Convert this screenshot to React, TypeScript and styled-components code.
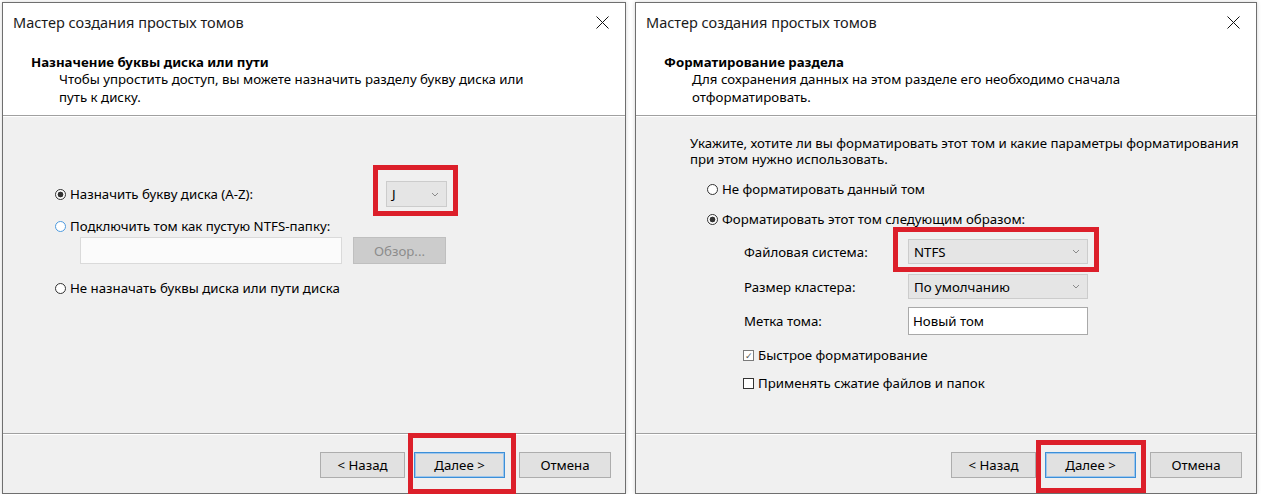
import styled, { createGlobalStyle } from "styled-components";

const GlobalStyle = createGlobalStyle`
  html, body {
    margin: 0;
    background: #ffffff;
  }
  body {
    font-family: "Noto Sans", "Liberation Sans", sans-serif;
    font-size: 13.25px;
    color: #000;
  }
`;

const Chevron = () => (
  <svg width="8" height="5" viewBox="0 0 8 5">
    <polyline points="1,1 4,4 7,1" fill="none" stroke="#8a8a8a" strokeWidth="1" />
  </svg>
);

const CloseIcon = () => (
  <svg width="13" height="13" viewBox="0 0 13 13">
    <line x1="0.5" y1="0.5" x2="12.5" y2="12.5" stroke="#111" strokeWidth="1" />
    <line x1="12.5" y1="0.5" x2="0.5" y2="12.5" stroke="#111" strokeWidth="1" />
  </svg>
);

const Wizard = ({
  header,
  subtitle,
  width,
  nextMark,
  children,
}: {
  header: string;
  subtitle: React.ReactNode;
  width: number;
  nextMark: [number, number, number, number];
  children: React.ReactNode;
}) => (
  <Dialog $width={width}>
    <TitleBar>
      <span>Мастер создания простых томов</span>
      <CloseIcon />
    </TitleBar>
    <Header>
      <h3>{header}</h3>
      <p>{subtitle}</p>
    </Header>
    <Separator />
    <Body>{children}</Body>
    <Separator />
    <Footer>
      <Button $width={85}>&lt; Назад</Button>
      <Marked $t={nextMark[0]} $r={nextMark[1]} $b={nextMark[2]} $l={nextMark[3]}>
        <Button $width={91} $primary>
          Далее &gt;
        </Button>
      </Marked>
      <Button $width={92} $gap={14}>
        Отмена
      </Button>
    </Footer>
  </Dialog>
);

const App = () => {
  return (
    <>
      <GlobalStyle />
      <Page>
        <Wizard
          width={624}
          header="Назначение буквы диска или пути"
          subtitle={
            <>
              Чтобы упростить доступ, вы можете назначить разделу букву диска или
              <br />
              путь к диску.
            </>
          }
          nextMark={[19, 11, 16, 6]}
        >
          <LetterBody>
            <LetterRow>
              <Radio $checked>Назначить букву диска (A-Z):</Radio>
              <Marked $t={16} $r={11} $b={9} $l={13}>
                <Select $width={61} $height={26}>
                  <span>J</span>
                  <Chevron />
                </Select>
              </Marked>
            </LetterRow>
            <Radio $hover $mt={10}>
              Подключить том как пустую NTFS-папку:
            </Radio>
            <PathRow>
              <PathField />
              <BrowseButton disabled>Обзор...</BrowseButton>
            </PathRow>
            <Radio $mt={15}>Не назначать буквы диска или пути диска</Radio>
          </LetterBody>
        </Wizard>

        <Wizard
          width={622}
          header="Форматирование раздела"
          subtitle={
            <>
              Для сохранения данных на этом разделе его необходимо сначала
              <br />
              отформатировать.
            </>
          }
          nextMark={[12, 10, 15, 9]}
        >
          <FormatBody>
            <Intro>
              Укажите, хотите ли вы форматировать этот том и какие параметры форматирования
              <br />
              при этом нужно использовать.
            </Intro>
            <Indent>
              <Radio $mt={13}>Не форматировать данный том</Radio>
              <Radio $checked $mt={12}>
                Форматировать этот том следующим образом:
              </Radio>
            </Indent>
            <Options>
              <OptionLabel>Файловая система:</OptionLabel>
              <Marked $t={12} $r={11} $b={8} $l={15}>
                <Select $width={180} $height={25}>
                  <span>NTFS</span>
                  <Chevron />
                </Select>
              </Marked>
              <OptionLabel>Размер кластера:</OptionLabel>
              <Select $width={180} $height={25}>
                <span>По умолчанию</span>
                <Chevron />
              </Select>
              <OptionLabel>Метка тома:</OptionLabel>
              <TextField>Новый том</TextField>
            </Options>
            <Checks>
              <Check $checked $mt={9}>
                Быстрое форматирование
              </Check>
              <Check $mt={10}>Применять сжатие файлов и папок</Check>
            </Checks>
          </FormatBody>
        </Wizard>
      </Page>
    </>
  );
};

const Page = styled.div`
  display: flex;
  gap: 9px;
  height: 494px;
  padding: 2px 0 0 2px;
  box-sizing: border-box;
  overflow: hidden;
`;

const Dialog = styled.div<{ $width: number }>`
  width: ${({ $width }) => $width}px;
  height: 492px;
  box-sizing: border-box;
  border: 1px solid #6f6f6f;
  box-shadow: 0 0 4px rgba(0, 0, 0, 0.18);
  background: #f0f0f0;
  display: flex;
  flex-direction: column;
  flex-shrink: 0;
`;

const TitleBar = styled.div`
  height: 38px;
  background: #fff;
  display: flex;
  align-items: center;
  justify-content: space-between;
  padding: 0 16px 0 10px;
  font-size: 14.5px;
  color: #1a1a1a;
  svg {
    margin-top: 1px;
  }
`;

const Header = styled.div`
  background: #fff;
  padding: 12px 0 9px 28px;
  h3 {
    margin: 0;
    font-size: 13.25px;
    font-weight: 700;
    line-height: 18px;
  }
  p {
    margin: 0;
    padding-left: 28px;
    line-height: 17.5px;
  }
`;

const Separator = styled.div`
  height: 1px;
  background: #a0a0a0;
  border-bottom: 1px solid #fff;
  flex-shrink: 0;
`;

const Body = styled.div`
  flex: 1;
  min-height: 0;
`;

const Footer = styled.div`
  height: 58px;
  display: flex;
  justify-content: flex-end;
  align-items: flex-start;
  gap: 9px;
  padding: 17px 14px 0 0;
  box-sizing: border-box;
`;

const Button = styled.button<{ $width: number; $primary?: boolean; $gap?: number }>`
  width: ${({ $width }) => $width}px;
  height: 26px;
  margin-left: ${({ $gap }) => ($gap ? $gap - 9 : 0)}px;
  background: #e1e1e1;
  border: 1px solid ${({ $primary }) => ($primary ? "#3c8fd8" : "#adadad")};
  box-shadow: ${({ $primary }) => ($primary ? "inset 0 0 0 1px #9dc6ec" : "none")};
  font-family: inherit;
  font-size: 13.25px;
  color: #000;
  padding: 0;
`;

const Marked = styled.span<{ $t: number; $r: number; $b: number; $l: number }>`
  position: relative;
  display: inline-flex;
  &::after {
    content: "";
    position: absolute;
    top: -${({ $t }) => $t}px;
    right: -${({ $r }) => $r}px;
    bottom: -${({ $b }) => $b}px;
    left: -${({ $l }) => $l}px;
    border: 5px solid #dc1f2a;
    pointer-events: none;
  }
`;

const Radio = styled.div<{ $checked?: boolean; $hover?: boolean; $mt?: number }>`
  display: flex;
  align-items: center;
  gap: 4px;
  height: 18px;
  margin-top: ${({ $mt }) => $mt ?? 0}px;
  white-space: nowrap;
  &::before {
    content: "";
    width: 11px;
    height: 11px;
    box-sizing: border-box;
    border-radius: 50%;
    border: 1px solid ${({ $hover }) => ($hover ? "#4d9be0" : "#333")};
    background: ${({ $checked }) =>
      $checked ? "radial-gradient(circle, #333 0 2.6px, #fff 3.2px)" : "#fff"};
    flex-shrink: 0;
  }
`;

const Check = styled.div<{ $checked?: boolean; $mt?: number }>`
  display: flex;
  align-items: center;
  gap: 4px;
  height: 18px;
  margin-top: ${({ $mt }) => $mt ?? 0}px;
  &::before {
    content: ${({ $checked }) => ($checked ? '"✓"' : '""')};
    width: 11px;
    height: 11px;
    box-sizing: border-box;
    border: 1px solid ${({ $checked }) => ($checked ? "#7a7a7a" : "#333")};
    background: #fff;
    font-size: 9px;
    line-height: 9px;
    text-align: center;
    color: #555;
    flex-shrink: 0;
  }
`;

const Select = styled.div<{ $width: number; $height: number }>`
  width: ${({ $width }) => $width}px;
  height: ${({ $height }) => $height}px;
  box-sizing: border-box;
  background: #e5e5e5;
  border: 1px solid #cccccc;
  display: flex;
  align-items: center;
  justify-content: space-between;
  padding: 0 7px 0 5px;
`;

const LetterBody = styled.div`
  padding: 64px 0 0 52px;
`;

const LetterRow = styled.div`
  display: grid;
  grid-template-columns: 331px auto;
  align-items: center;
  height: 26px;
  justify-content: start;
`;

const PathRow = styled.div`
  display: flex;
  gap: 11px;
  margin-top: 2px;
  padding-left: 25px;
`;

const PathField = styled.div`
  width: 262px;
  height: 27px;
  box-sizing: border-box;
  background: #fbfbfb;
  border: 1px solid #dadada;
`;

const BrowseButton = styled.button`
  width: 93px;
  height: 27px;
  background: #cccccc;
  border: 1px solid #bfbfbf;
  color: #8c8c8c;
  font-family: inherit;
  font-size: 13.25px;
  padding: 0;
`;

const FormatBody = styled.div`
  padding: 18px 0 0 54px;
`;

const Intro = styled.p`
  margin: 0;
  line-height: 16px;
  white-space: nowrap;
`;

const Indent = styled.div`
  padding-left: 17px;
`;

const Options = styled.div`
  display: grid;
  grid-template-columns: 164px 180px;
  grid-template-rows: 25px 25px 28px;
  row-gap: 10px;
  align-items: center;
  margin: 11px 0 0 54px;
  & > :nth-child(5) {
    margin-top: -4px;
  }
`;

const OptionLabel = styled.span``;

const TextField = styled.div`
  height: 28px;
  box-sizing: border-box;
  background: #fff;
  border: 1px solid #a9a9a9;
  display: flex;
  align-items: center;
  padding-left: 4px;
  margin-top: -4px;
`;

const Checks = styled.div`
  padding-left: 53px;
`;

export default App;
